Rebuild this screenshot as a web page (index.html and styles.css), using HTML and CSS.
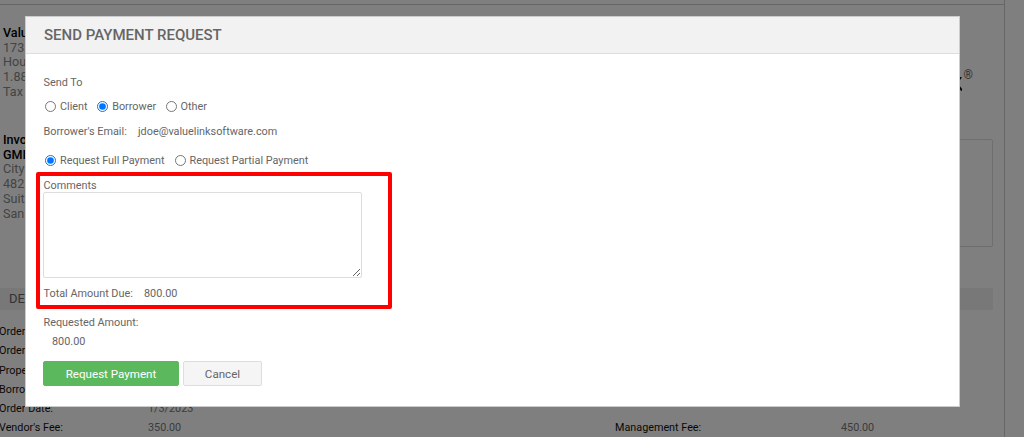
FILE: index.html
```html
<!DOCTYPE html>
<html lang="en">
<head>
<meta charset="utf-8">
<title>Send Payment Request</title>
<link rel="stylesheet" href="styles.css">
</head>
<body>
<div class="page">
  <div class="topstrip"></div>
  <div class="content">
    <div class="top-section">
      <div class="address">
        <div class="strong">Valu</div>
        <div>173</div>
        <div>Hou</div>
        <div>1.88</div>
        <div>Tax</div>
      </div>
      <div class="logo">
        <svg class="logo-x" width="6" height="14" viewBox="0 0 6 14" aria-hidden="true"><path d="M0 7 L5 0 M1 7 L6 13.5" fill="none" stroke="#111" stroke-width="2"/></svg>
        <span class="reg">®</span>
      </div>
    </div>
    <div class="invoice-section">
      <div class="address">
        <div class="strong">Invo</div>
        <div class="strong">GMI</div>
        <div>City</div>
        <div>482</div>
        <div>Suit</div>
        <div>San</div>
      </div>
      <div class="summary-box"></div>
    </div>
    <div class="section-bar">DE</div>
    <div class="details">
      <div class="label">Order</div><div class="value"></div><div></div><div></div>
      <div class="label">Order</div><div class="value"></div><div></div><div></div>
      <div class="label">Prope</div><div class="value"></div><div></div><div></div>
      <div class="label">Borro</div><div class="value"></div><div></div><div></div>
      <div class="label">Order Date:</div><div class="value">1/3/2023</div><div></div><div></div>
      <div class="label">Vendor's Fee:</div><div class="value">350.00</div><div class="label">Management Fee:</div><div class="value">450.00</div>
    </div>
  </div>
</div>
<div class="backdrop"></div>
<div class="modal">
  <div class="modal-header">SEND PAYMENT REQUEST</div>
  <form class="modal-body">
    <div class="row send-to">Send To</div>
    <div class="row radios send-options">
      <label class="radio"><input type="radio" name="to">Client</label>
      <label class="radio"><input type="radio" name="to" checked>Borrower</label>
      <label class="radio"><input type="radio" name="to">Other</label>
    </div>
    <div class="row email"><span class="email-label">Borrower's Email:</span><span>jdoe@valuelinksoftware.com</span></div>
    <div class="row radios pay-options">
      <label class="radio"><input type="radio" name="pay" checked>Request Full Payment</label>
      <label class="radio"><input type="radio" name="pay">Request Partial Payment</label>
    </div>
    <div class="row comments-label">Comments</div>
    <textarea class="comments"></textarea>
    <div class="row total"><span class="total-label">Total Amount Due:</span><span>800.00</span></div>
    <div class="row requested">Requested Amount:</div>
    <div class="row requested-value">800.00</div>
    <div class="actions">
      <button type="button" class="btn btn-primary">Request Payment</button>
      <button type="button" class="btn btn-default">Cancel</button>
    </div>
  </form>
</div>
<div class="highlight"></div>
</body>
</html>
```
FILE: styles.css
```css
* { box-sizing: border-box; }
html, body { margin: 0; height: 437px; overflow: hidden; background: #fff; }
body { font-family: Roboto, "Liberation Sans", sans-serif; font-size: 11px; color: #666; }

.page { width: 1005px; height: 437px; border-right: 1px solid #ccc; overflow: hidden; }
.topstrip { height: 5px; border-bottom: 1px solid #ccc; }
.content { padding-right: 11px; }
.top-section { display: flex; justify-content: space-between; height: 102px; padding: 21px 0 0 3px; }
.address { font-size: 12.6px; line-height: 14.7px; color: #888; }
.strong { color: #000; font-weight: 500; }
.logo { display: flex; align-items: flex-start; margin-top: 44px; margin-right: 20px; height: 24px; }
.logo-x { margin-top: 7px; }
.reg { font-size: 12px; line-height: 10px; color: #666; margin-left: 2px; }
.invoice-section { display: flex; justify-content: space-between; height: 181px; padding: 26px 0 0 3px; }
.summary-box { width: 500px; height: 108px; margin-top: 6px; border: 1px solid #ddd; border-radius: 2px; }
.section-bar { height: 22px; line-height: 22px; background: #f1f1f1; padding-left: 9px; color: #666; font-size: 13px; }
.details { display: grid; grid-template-columns: 149px 467px 226px 100px; grid-auto-rows: 19.3px; margin: 12px 0 0 -1px; font-size: 10.8px; line-height: 19.3px; }
.label { color: #111; }
.value { color: #777; }

.backdrop { position: fixed; inset: 0; background: rgba(0, 0, 0, .5); }

.modal { position: fixed; left: 25px; top: 16px; width: 935px; height: 391px; background: #fff; border: 1px solid #ccc; font-size: 10.85px; color: #666; }
.modal-header { height: 37px; line-height: 36px; padding-left: 18px; background: #f2f2f2; border-bottom: 1px solid #ddd; font-size: 15px; font-weight: 500; color: #666; }
.modal-body { display: flex; flex-direction: column; padding: 21px 18px 0 17px; }
.row { line-height: 15px; height: 15px; padding-left: .5px; }
.radios { display: flex; }
.radio { display: flex; align-items: center; }
.radio input { width: 11px; height: 11px; margin: 0 4px 0 1.5px; accent-color: #0075ff; }
.send-options { margin-top: 9px; gap: 8px; }
.email { margin-top: 10px; display: flex; }
.email-label { width: 94.5px; }
.pay-options { margin-top: 14px; gap: 8.5px; }
.comments-label { margin-top: 10px; height: 14px; line-height: 16px; }
.comments { display: block; width: 319px; height: 86px; margin: 0; border: 1px solid #ddd; border-radius: 2px; background: #fff; outline: none; }
.total { margin-top: 8px; display: flex; }
.total-label { width: 100.5px; }
.requested { margin-top: 14px; }
.requested-value { margin-top: 4px; padding-left: 9px; }
.actions { display: flex; gap: 4px; margin-top: 12px; }
.btn { height: 25px; border-radius: 2px; font-family: inherit; font-size: 11.6px; padding: 0; cursor: pointer; }
.btn-primary { width: 136px; background: #5cb85c; border: 1px solid #5cb85c; color: #fff; }
.btn-default { width: 79px; background: #f5f5f5; border: 1px solid #ddd; color: #666; }

.highlight { position: fixed; left: 36px; top: 172px; width: 356px; height: 137px; border: 4px solid #f00; border-radius: 2px; }
```
